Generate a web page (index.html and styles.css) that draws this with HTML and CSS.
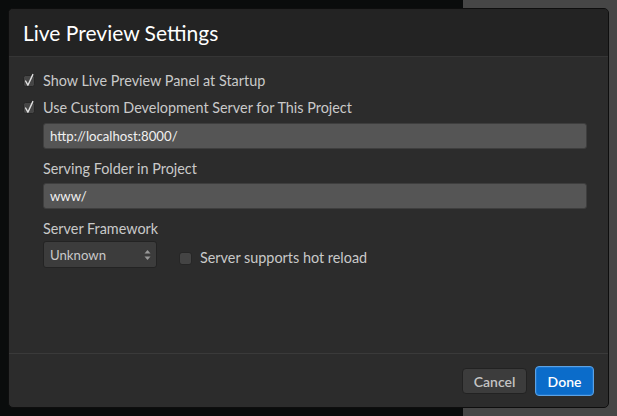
FILE: index.html
```html
<!DOCTYPE html>
<html>
<head>
<meta charset="utf-8">
<link rel="stylesheet" href="styles.css">
</head>
<body>
<div class="dialog">
  <div class="dialog-header">
    <h1 class="dialog-title">Live Preview Settings</h1>
  </div>
  <div class="dialog-body">
    <label class="check-row row-first">
      <svg class="checkbox" width="13" height="14" viewBox="0 0 13 14"><rect x="0.5" y="2.5" width="11" height="11" rx="2" fill="#464646" stroke="#262626"/><path d="M2.6 8 L4.9 12.2 L9.8 1.6" fill="none" stroke="#e0e0e0" stroke-width="1.4" stroke-linecap="round" stroke-linejoin="round"/></svg>
      <span class="check-label">Show Live Preview Panel at Startup</span>
    </label>
    <label class="check-row row-second">
      <svg class="checkbox" width="13" height="14" viewBox="0 0 13 14"><rect x="0.5" y="2.5" width="11" height="11" rx="2" fill="#464646" stroke="#262626"/><path d="M2.6 8 L4.9 12.2 L9.8 1.6" fill="none" stroke="#e0e0e0" stroke-width="1.4" stroke-linecap="round" stroke-linejoin="round"/></svg>
      <span class="check-label">Use Custom Development Server for This Project</span>
    </label>
    <div class="indent">
      <div class="text-input input-url">http://localhost:8000/</div>
      <div class="field-label">Serving Folder in Project</div>
      <div class="text-input">www/</div>
      <div class="field-label">Server Framework</div>
      <div class="framework-row">
        <div class="select">
          <span>Unknown</span>
          <svg class="select-arrows" width="7" height="12" viewBox="0 0 7 12"><path d="M0.5 4.5 L3.5 1 L6.5 4.5 Z" fill="#9a9a9a"/><path d="M0.5 7.5 L3.5 11 L6.5 7.5 Z" fill="#9a9a9a"/></svg>
        </div>
        <label class="hot-reload">
          <span class="box-empty"></span>
          <span class="check-label">Server supports hot reload</span>
        </label>
      </div>
    </div>
  </div>
  <div class="dialog-footer">
    <button class="btn btn-cancel">Cancel</button>
    <button class="btn btn-primary">Done</button>
  </div>
</div>
</body>
</html>
```
FILE: styles.css
```css
html, body {
  margin: 0;
  padding: 0;
}
body {
  width: 617px;
  height: 416px;
  overflow: hidden;
  background: linear-gradient(to right, #0a0c0c 0, #0a0c0c 463px, #464646 463px, #464646 100%);
  font-family: "Lato", "Noto Sans", sans-serif;
  padding: 8px 0 0 8px;
  box-sizing: border-box;
}
.dialog {
  width: 601px;
  height: 400px;
  box-sizing: border-box;
  border: 1px solid #0e0e0e;
  border-radius: 5px;
  background: #2c2c2c;
  overflow: hidden;
  display: flex;
  flex-direction: column;
}
.dialog-header {
  height: 48px;
  box-sizing: border-box;
  background: #232323;
  border-bottom: 1px solid #353535;
  padding: 0 14px;
  display: flex;
  align-items: center;
}
.dialog-title {
  margin: 0;
  font-size: 21px;
  font-weight: 400;
  color: #ffffff;
  line-height: 24px;
  padding-top: 1px;
}
.dialog-body {
  height: 297px;
  box-sizing: border-box;
  border-bottom: 1px solid #3a3a3a;
  padding: 14px 21px 0 14px;
  display: flex;
  flex-direction: column;
}
.check-row {
  display: flex;
  align-items: center;
  height: 20px;
  gap: 7px;
}
.row-second {
  margin-top: 7px;
}
.checkbox {
  flex: none;
  margin-top: -3px;
}
.check-label {
  font-size: 14.4px;
  color: #c9c9c9;
  line-height: 20px;
}
.indent {
  padding-left: 20px;
  display: flex;
  flex-direction: column;
}
.text-input {
  height: 26px;
  box-sizing: border-box;
  background: #555555;
  border: 1px solid #3e3e3e;
  border-radius: 3px;
  color: #f0f0f0;
  font-size: 13.2px;
  line-height: 24px;
  padding: 0 6px;
}
.input-url {
  margin-top: 5px;
}
.field-label {
  font-size: 14.4px;
  color: #c9c9c9;
  line-height: 20px;
  margin: 10px 0 4px;
}
.framework-row {
  display: flex;
  align-items: center;
  margin-top: -1px;
}
.select {
  width: 114px;
  height: 27px;
  box-sizing: border-box;
  background: #3c3c3c;
  border: 1px solid #232323;
  border-radius: 3px;
  display: flex;
  align-items: center;
  justify-content: space-between;
  padding: 0 5px 0 6px;
  color: #c9c9c9;
  font-size: 13.2px;
  margin-top: -1px;
}
.select-arrows {
  flex: none;
}
.hot-reload {
  display: flex;
  align-items: center;
  gap: 8px;
  margin-left: 22px;
  margin-top: 6px;
}
.box-empty {
  width: 13px;
  height: 13px;
  box-sizing: border-box;
  background: #444444;
  border: 1px solid #262626;
  border-radius: 3px;
  flex: none;
}
.dialog-footer {
  flex: 1;
  display: flex;
  justify-content: flex-end;
  align-items: flex-start;
  gap: 8px;
  padding: 12px 14px 0 0;
}
.btn {
  font-family: "Lato", "Noto Sans", sans-serif;
  font-size: 14px;
  font-weight: 600;
  border-radius: 4px;
  box-sizing: border-box;
  cursor: default;
}
.btn-cancel {
  height: 26px;
  margin-top: 2px;
  width: 65px;
  background: #3c3c3c;
  border: 1px solid #222222;
  color: #c4c4c4;
}
.btn-primary {
  height: 30px;
  width: 59px;
  background: #0b6cca;
  border: 1px solid #5ba2e4;
  color: #ffffff;
  box-shadow: inset 0 0 0 1px #1b76d0;
}
```
